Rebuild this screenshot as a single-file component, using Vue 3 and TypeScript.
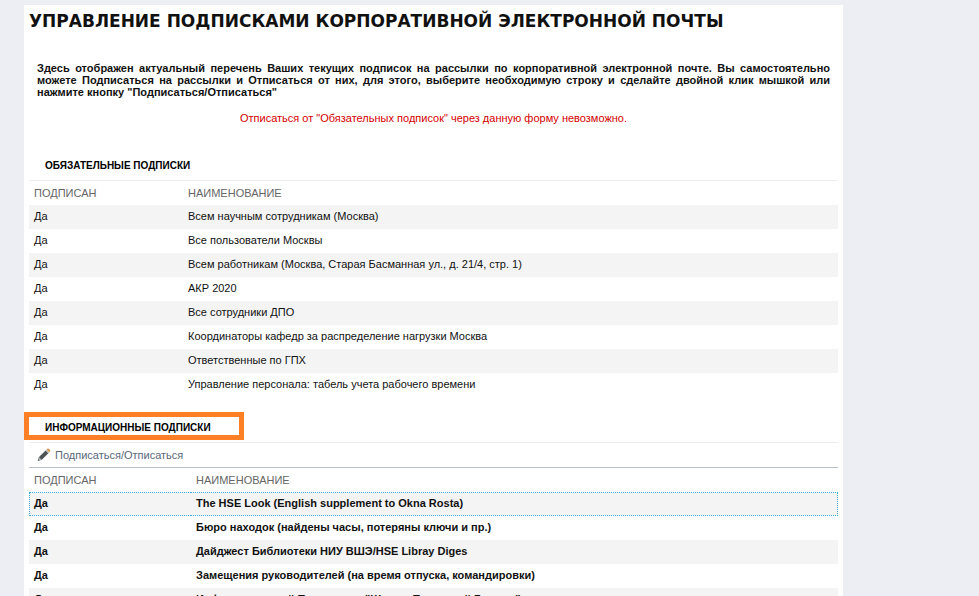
<script setup lang="ts">
interface Subscription {
  signed: string
  name: string
}

const mandatory: Subscription[] = [
  'Всем научным сотрудникам (Москва)',
  'Все пользователи Москвы',
  'Всем работникам (Москва, Старая Басманная ул., д. 21/4, стр. 1)',
  'АКР 2020',
  'Все сотрудники ДПО',
  'Координаторы кафедр за распределение нагрузки Москва',
  'Ответственные по ГПХ',
  'Управление персонала: табель учета рабочего времени',
].map((name) => ({ signed: 'Да', name }))

const informational: Subscription[] = [
  'The HSE Look (English supplement to Okna Rosta)',
  'Бюро находок (найдены часы, потеряны ключи и пр.)',
  'Дайджест Библиотеки НИУ ВШЭ/HSE Libray Diges',
  'Замещения руководителей (на время отпуска, командировки)',
  'Информационной Программы "Школы Проектной Группы"',
].map((name) => ({ signed: 'Да', name }))
</script>

<template>
  <main class="page">
    <h1>УПРАВЛЕНИЕ ПОДПИСКАМИ КОРПОРАТИВНОЙ ЭЛЕКТРОННОЙ ПОЧТЫ</h1>
    <p class="intro">
      Здесь отображен актуальный перечень Ваших текущих подписок на рассылки по корпоративной
      электронной почте. Вы самостоятельно можете Подписаться на рассылки и Отписаться от них, для
      этого, выберите необходимую строку и сделайте двойной клик мышкой или нажмите кнопку
      "Подписаться/Отписаться"
    </p>
    <p class="warning">Отписаться от "Обязательных подписок" через данную форму невозможно.</p>

    <section class="group">
      <h2>ОБЯЗАТЕЛЬНЫЕ ПОДПИСКИ</h2>
      <table>
        <thead>
          <tr>
            <th class="signed" scope="col">ПОДПИСАН</th>
            <th scope="col">НАИМЕНОВАНИЕ</th>
          </tr>
        </thead>
        <tbody>
          <tr v-for="row in mandatory" :key="row.name">
            <td>{{ row.signed }}</td>
            <td>{{ row.name }}</td>
          </tr>
        </tbody>
      </table>
    </section>

    <section class="group informational">
      <h2 class="marked">ИНФОРМАЦИОННЫЕ ПОДПИСКИ</h2>
      <div class="toolbar">
        <button type="button">
          <svg width="14" height="14" viewBox="0 0 14 14" aria-hidden="true">
            <path d="M.8 12.8 2 9 8.6 2.4 11.4 5.2 4.8 11.8Z" fill="#4b5254" />
            <path d="M.8 12.8 2 9 4.8 11.8Z" fill="#a9adad" />
            <path d="M.8 12.8 1.3 11.3 2.3 12.3Z" fill="#4b5254" />
            <path d="M8.6 2.4 9.5 1.5 12.3 4.3 11.4 5.2Z" fill="#b9bcbc" />
            <path d="M9.5 1.5 10.4 .7Q11.2 .2 11.9 .8L13 1.9Q13.6 2.6 13 3.5L12.3 4.3Z" fill="#dc9650" />
          </svg>
          Подписаться/Отписаться
        </button>
      </div>
      <table>
        <thead>
          <tr>
            <th class="signed" scope="col">ПОДПИСАН</th>
            <th scope="col">НАИМЕНОВАНИЕ</th>
          </tr>
        </thead>
        <tbody>
          <tr v-for="(row, index) in informational" :key="row.name" :class="{ selected: index === 0 }">
            <td>{{ row.signed }}</td>
            <td>{{ row.name }}</td>
          </tr>
        </tbody>
      </table>
    </section>
  </main>
</template>

<style>
body {
  background: #edeef4;
}
html {
  overflow: hidden;
}
</style>

<style scoped>
.page {
  box-sizing: border-box;
  margin: 5px 136px 0 24px;
  padding: 4px 5px 0;
  background: #fff;
  color: #111;
  font: 11px/12px "Liberation Sans", Arial, sans-serif;
}
h1 {
  margin: 0;
  font: bold 17px/24px "DejaVu Sans", Verdana, sans-serif;
  white-space: nowrap;
}
.intro {
  margin: 29px 8px 0;
  font-weight: bold;
  text-align: justify;
}
.warning {
  margin: 14px 0 0;
  text-align: center;
  color: #d40000;
}
.group {
  margin-top: 28px;
}
h2 {
  box-sizing: border-box;
  height: 28px;
  margin: 0;
  padding: 0 16px;
  font-size: 10px;
  line-height: 28px;
  color: #000;
}
table {
  width: 100%;
  table-layout: fixed;
  border-collapse: separate;
  border-spacing: 0;
  border-top: 1px solid #ededed;
}
th,
td {
  height: 24px;
  padding: 0 5px;
  text-align: left;
  line-height: 22px;
  vertical-align: top;
  white-space: nowrap;
  box-sizing: border-box;
}
th {
  font-weight: normal;
  line-height: 24px;
  color: #666;
}
.signed {
  width: 154px;
}
tbody tr:nth-child(odd) {
  background: #f4f4f4;
}
.informational {
  margin-top: 15px;
}
.marked {
  width: 220px;
  margin-left: -5px;
  border: 5px solid #ff7f27;
  line-height: 22px;
}
.toolbar {
  margin-top: 2px;
  border-top: 1px solid #ededed;
}
.toolbar button {
  display: flex;
  align-items: center;
  gap: 4px;
  height: 24px;
  padding: 0 8px;
  border: 0;
  background: none;
  color: #59677a;
  font: inherit;
}
.informational table {
  border-top-color: #b8bfc8;
}
.informational .signed {
  width: 162px;
}
.informational td {
  font-weight: bold;
}
.informational .selected td {
  border: 0 dotted #38b0de;
  border-width: 1px 0;
  line-height: 20px;
}
.informational .selected td:first-child {
  padding-left: 4px;
  border-left-width: 1px;
}
.informational .selected td:last-child {
  border-right-width: 1px;
}
</style>
